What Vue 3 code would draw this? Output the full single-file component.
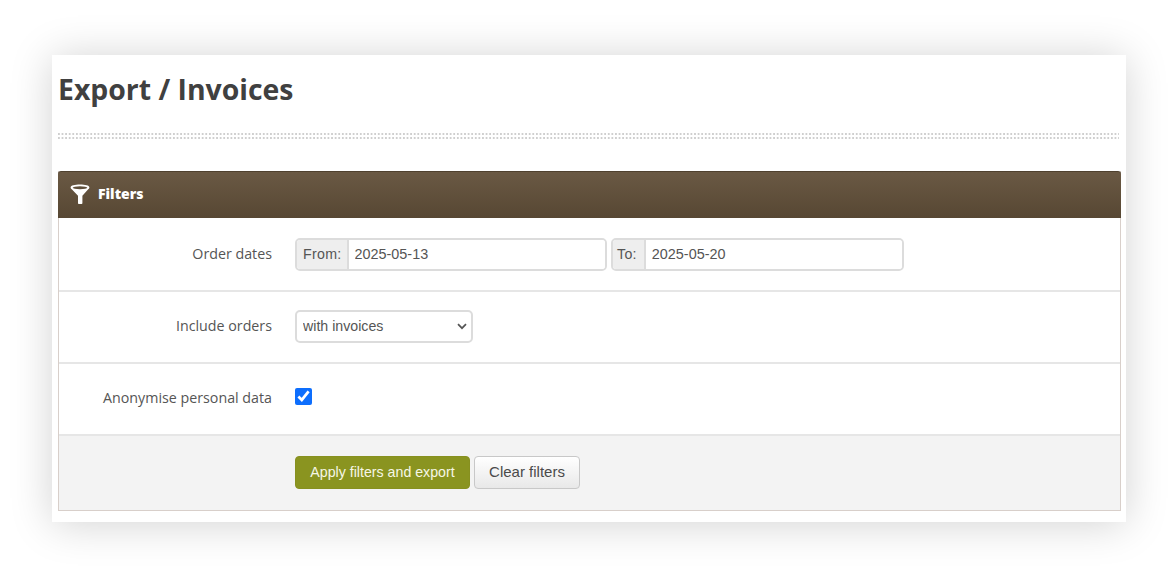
<script setup>
import { ref } from 'vue'

const fromDate = ref('2025-05-13')
const toDate = ref('2025-05-20')
const include = ref('with invoices')
const anonymise = ref(true)
</script>

<template>
  <div class="page">
    <div class="card">
      <h1 class="title">Export / Invoices</h1>
      <div class="dots"></div>

      <div class="panel">
        <div class="panel-head">
          <svg class="funnel" width="20" height="21" viewBox="0 0 20 21">
            <path d="M.6 3.400C.6 1.500 5 .6 10 .6s9.400.9 9.400 2.800c0 .9-.7 1.500-1.400 2l-5.600 6.300v7.300c0 .7-.4 1.100-1.100 1.100H9.100c-.7 0-1.100-.4-1.100-1.100v-7.300L2 5.400C1.300 4.900.6 4.300.6 3.400z" fill="#fff" />
            <ellipse cx="10" cy="3.800" rx="7.300" ry="1.500" fill="#5f4f3b" />
          </svg>
          <span class="head-text">Filters</span>
        </div>

        <div class="row">
          <label class="row-label">Order dates</label>
          <div class="field">
            <div class="date-group">
              <span class="addon">From:</span>
              <input v-model="fromDate" class="date-input" type="text" />
            </div>
            <div class="date-group">
              <span class="addon">To:</span>
              <input v-model="toDate" class="date-input" type="text" />
            </div>
          </div>
        </div>

        <div class="row row-select">
          <label class="row-label">Include orders</label>
          <div class="field">
            <div class="select-wrap">
              <select v-model="include" class="select">
                <option>with invoices</option>
                <option>without invoices</option>
              </select>
              <svg class="chevron" width="10" height="7" viewBox="0 0 10 7">
                <path d="M1 1.200 5 5.200l4-4" fill="none" stroke="#555" stroke-width="1.700" />
              </svg>
            </div>
          </div>
        </div>

        <div class="row row-check">
          <label class="row-label">Anonymise personal data</label>
          <div class="field">
            <input v-model="anonymise" class="check" type="checkbox" />
          </div>
        </div>

        <div class="row row-actions">
          <div class="row-label"></div>
          <div class="field">
            <button class="btn btn-apply">Apply filters and export</button>
            <button class="btn btn-clear">Clear filters</button>
          </div>
        </div>
      </div>
    </div>
  </div>
</template>

<style scoped>
.page {
  padding: 55px 48px 49px 52px;
  background: #fff;
}

.card {
  height: 467px;
  box-sizing: border-box;
  padding: 0 5px 0 6px;
  background: #fff;
  box-shadow: 0 2px 40px rgba(0, 0, 0, 0.18);
}

.title {
  margin: 0;
  padding-top: 14px;
  height: 63px;
  box-sizing: border-box;
  font-family: "Open Sans", sans-serif;
  font-size: 28.4px;
  font-weight: 700;
  line-height: 40px;
  color: #404040;
}

.dots {
  height: 6px;
  margin: 15px 2px 0 0;
  background-image: linear-gradient(90deg, #cfcfcf 2px, transparent 2px), linear-gradient(90deg, #cfcfcf 2px, transparent 2px);
  background-size: 3.600px 2px;
  background-position: 0 0, 0 100%;
  background-repeat: repeat-x;
}

.panel {
  margin-top: 32px;
  border: 1px solid #d8cfca;
  border-top: 0;
  height: 340px;
  box-sizing: border-box;
  display: flex;
  flex-direction: column;
}

.panel-head {
  height: 47px;
  margin: 0 -1px;
  display: flex;
  align-items: center;
  gap: 8px;
  padding: 0 0 2px 12px;
  box-sizing: border-box;
  border-top: 1px solid #4f412f;
  border-radius: 3px 3px 0 0;
  background: linear-gradient(#6a5944, #574733);
  font-family: "Open Sans", sans-serif;
  font-size: 14px;
  font-weight: 800;
  color: #fff;
}

.head-text {
  margin-bottom: 1px;
}

.row {
  height: 72px;
  flex: none;
  display: flex;
  align-items: center;
  border-bottom: 2px solid #e6e6e6;
  box-sizing: border-box;
  font-family: "Open Sans", sans-serif;
  font-size: 14.25px;
  color: #555;
}

.panel-head + .row {
  height: 74px;
}

.row-label {
  width: 213px;
  padding-bottom: 2px;
  text-align: right;
  flex: none;
}

.row-select .row-label {
  padding-bottom: 4px;
}

.field {
  margin-left: 23px;
  display: flex;
  align-items: center;
  gap: 4px;
}

.date-group {
  display: flex;
  width: 312px;
  height: 33px;
  box-sizing: border-box;
  border: 2px solid #dcdcdc;
  border-radius: 5px;
  overflow: hidden;
}

.date-group + .date-group {
  width: 293px;
}

.addon {
  display: flex;
  align-items: center;
  padding: 0 5px 0 6px;
  background: #eee;
  border-right: 2px solid #dcdcdc;
  color: #555;
  font-family: "Liberation Sans", sans-serif;
  font-size: 14.2px;
  letter-spacing: 0.3px;
}

.date-group + .date-group .addon {
  padding: 0 7px 0 4px;
}

.date-input {
  flex: 1;
  min-width: 0;
  border: 0;
  outline: 0;
  padding: 0 6px;
  font-family: "Liberation Sans", sans-serif;
  font-size: 14.4px;
  color: #555;
}

.select-wrap {
  position: relative;
  width: 178px;
  height: 33px;
  margin-bottom: 1px;
}

.select {
  appearance: none;
  width: 100%;
  height: 100%;
  box-sizing: border-box;
  padding: 0 6px 2px;
  border: 2px solid #dcdcdc;
  border-radius: 5px;
  background: #fff;
  font-family: "Liberation Sans", sans-serif;
  font-size: 14.2px;
  color: #555;
}

.chevron {
  position: absolute;
  right: 6px;
  top: 13px;
  pointer-events: none;
}

.row-check {
  align-items: flex-start;
  padding-top: 24px;
}

.check {
  width: 17px;
  height: 17px;
  margin: 0;
  accent-color: #0d6efd;
}

.row-actions {
  flex: 1;
  border-bottom: 0;
  background: #f3f3f3;
}

.row-actions .field {
  margin-bottom: 1px;
}

.btn {
  height: 33px;
  box-sizing: border-box;
  border-radius: 4px;
  padding: 0 0 1px;
  font-family: "Liberation Sans", sans-serif;
  cursor: pointer;
}

.btn-apply {
  width: 175px;
  border: 1px solid #87901f;
  background: #8a9420;
  color: #f6f7e6;
  font-size: 14.2px;
}

.btn-clear {
  width: 106px;
  padding-bottom: 2px;
  border: 1px solid #c8c8c8;
  background: linear-gradient(#fff, #e8e8e8);
  color: #4a4a4a;
  font-size: 15px;
}
</style>
